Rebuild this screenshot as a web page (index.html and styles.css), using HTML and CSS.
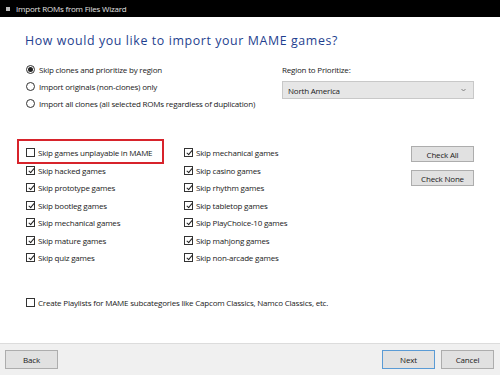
FILE: index.html
```html
<!DOCTYPE html>
<html>
<head>
<meta charset="utf-8">
<link rel="stylesheet" href="styles.css">
</head>
<body>
<div class="window">
  <div class="titlebar"><span class="ticon"></span><span class="ttext">Import ROMs from Files Wizard</span></div>
  <div class="content">
    <h1 class="heading">How would you like to import your MAME games?</h1>
    <div class="top">
      <div class="radios">
        <div class="row"><span class="radio on"></span><span>Skip clones and prioritize by region</span></div>
        <div class="row"><span class="radio"></span><span>Import originals (non-clones) only</span></div>
        <div class="row"><span class="radio"></span><span>Import all clones (all selected ROMs regardless of duplication)</span></div>
      </div>
      <div class="region">
        <div class="rlabel">Region to Prioritize:</div>
        <div class="select"><span>North America</span>
          <svg class="chev" width="5" height="4" viewBox="0 0 5 4"><path d="M0.5 1 L2.5 3 L4.5 1" fill="none" stroke="#777" stroke-width="0.9"/></svg>
        </div>
      </div>
    </div>
    <div class="checks">
      <div class="col col1">
        <div class="row hl"><span class="cb"></span><span>Skip games unplayable in MAME</span></div>
        <div class="row"><span class="cb on"></span><span>Skip hacked games</span></div>
        <div class="row"><span class="cb on"></span><span>Skip prototype games</span></div>
        <div class="row"><span class="cb on"></span><span>Skip bootleg games</span></div>
        <div class="row"><span class="cb on"></span><span>Skip mechanical games</span></div>
        <div class="row"><span class="cb on"></span><span>Skip mature games</span></div>
        <div class="row"><span class="cb on"></span><span>Skip quiz games</span></div>
      </div>
      <div class="col col2">
        <div class="row"><span class="cb on"></span><span>Skip mechanical games</span></div>
        <div class="row"><span class="cb on"></span><span>Skip casino games</span></div>
        <div class="row"><span class="cb on"></span><span>Skip rhythm games</span></div>
        <div class="row"><span class="cb on"></span><span>Skip tabletop games</span></div>
        <div class="row"><span class="cb on"></span><span>Skip PlayChoice-10 games</span></div>
        <div class="row"><span class="cb on"></span><span>Skip mahjong games</span></div>
        <div class="row"><span class="cb on"></span><span>Skip non-arcade games</span></div>
      </div>
      <div class="btncol">
        <div class="btn">Check All</div>
        <div class="btn">Check None</div>
      </div>
    </div>
    <div class="row playlist"><span class="cb"></span><span>Create Playlists for MAME subcategories like Capcom Classics, Namco Classics, etc.</span></div>
  </div>
  <div class="footer">
    <div class="btn fbtn">Back</div>
    <div class="spacer"></div>
    <div class="btn fbtn next">Next</div>
    <div class="btn fbtn">Cancel</div>
  </div>
</div>
</body>
</html>
```
FILE: styles.css
```css
* { box-sizing: border-box; }
html, body { margin: 0; padding: 0; }
body {
  width: 500px; height: 375px; overflow: hidden;
  font-family: "Open Sans", "Noto Sans", sans-serif;
  font-size: 8px; letter-spacing: -0.2px; color: #1a1a1a; background: #fff;
}
.window { width: 500px; height: 375px; display: flex; flex-direction: column; }
.titlebar {
  height: 17px; background: #000; color: #e0e0e0;
  display: flex; align-items: center; padding-left: 6px; font-size: 8px;
}
.ticon { width: 4px; height: 4px; background: #bbb; margin-right: 6px; }
.content { flex: 1; padding: 0 0 0 26px; }
.heading {
  margin: 0 0 0 -1px; font-weight: normal; font-size: 12.4px; letter-spacing: 0.6px; color: #1f3f8f;
  padding-top: 16px; height: 44px; line-height: 16px;
}
.top { display: flex; }
.radios { width: 256px; }
.row { display: flex; align-items: center; height: 17px; white-space: nowrap; }
.radio {
  width: 9px; height: 9px; border: 1px solid #333; border-radius: 50%;
  margin-right: 4px; display: flex; align-items: center; justify-content: center; flex: none;
}
.radio.on::after { content: ""; width: 5px; height: 5px; border-radius: 50%; background: #222; }
.rlabel { height: 20px; line-height: 17px; }
.select {
  width: 192px; height: 18px; background: #e6e6e6; border: 1px solid #c8c8c8;
  display: flex; align-items: center; justify-content: space-between; padding: 0 7px 0 5px;
}
.checks { display: flex; margin-top: 32px; }
.col { display: flex; flex-direction: column; }
.col .row { height: 17.5px; }
.col1 { width: 158px; }
.col2 { width: 227px; }
.cb {
  width: 9px; height: 9px; border: 1px solid #333; margin-right: 3px; flex: none;
  position: relative; background: #fff;
}
.cb.on::after {
  content: ""; position: absolute; left: 2.5px; top: 0px; width: 2px; height: 5px;
  border: solid #222; border-width: 0 1.5px 1.5px 0; transform: rotate(40deg);
}
.hl { position: relative; }
.hl::before {
  content: ""; position: absolute; left: -9px; top: -5px; width: 143px; height: 21px;
  border: 2px solid #d7232b;
}
.btncol { display: flex; flex-direction: column; gap: 8px; padding-top: 2px; }
.btn {
  width: 63px; height: 16px; background: #e1e1e1; border: 1px solid #adadad;
  display: flex; align-items: center; justify-content: center; white-space: nowrap;
}
.playlist { margin-top: 27px; }
.footer {
  height: 32px; background: #f0f0f0; border-top: 1px solid #dcdcdc;
  display: flex; align-items: center; padding: 0 6px 0 5px; gap: 6px;
}
.spacer { flex: 1; }
.fbtn { width: 53px; height: 19px; }
.next { border-color: #5a9bd5; }
```
